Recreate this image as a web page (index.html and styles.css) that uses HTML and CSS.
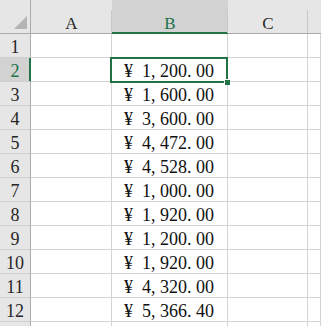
FILE: index.html
```html
<!DOCTYPE html>
<html>
<head>
<meta charset="utf-8">
<link rel="stylesheet" href="styles.css">
</head>
<body>
<div class="sheet">
  <div class="row head">
    <div class="rh corner"><span class="tri"></span></div>
    <div class="hc">A</div>
    <div class="hc sel">B</div>
    <div class="hc">C</div>
    <div class="hc rest"></div>
  </div>
  <div class="row"><div class="rh">1</div><div class="c"></div><div class="c"></div><div class="c"></div><div class="c"></div></div>
  <div class="row"><div class="rh sel">2</div><div class="c"></div><div class="c v"><span class="cur">¥</span>1<span class="p">,</span>200<span class="p">.</span>00</div><div class="c"></div><div class="c"></div></div>
  <div class="row"><div class="rh">3</div><div class="c"></div><div class="c v"><span class="cur">¥</span>1<span class="p">,</span>600<span class="p">.</span>00</div><div class="c"></div><div class="c"></div></div>
  <div class="row"><div class="rh">4</div><div class="c"></div><div class="c v"><span class="cur">¥</span>3<span class="p">,</span>600<span class="p">.</span>00</div><div class="c"></div><div class="c"></div></div>
  <div class="row"><div class="rh">5</div><div class="c"></div><div class="c v"><span class="cur">¥</span>4<span class="p">,</span>472<span class="p">.</span>00</div><div class="c"></div><div class="c"></div></div>
  <div class="row"><div class="rh">6</div><div class="c"></div><div class="c v"><span class="cur">¥</span>4<span class="p">,</span>528<span class="p">.</span>00</div><div class="c"></div><div class="c"></div></div>
  <div class="row"><div class="rh">7</div><div class="c"></div><div class="c v"><span class="cur">¥</span>1<span class="p">,</span>000<span class="p">.</span>00</div><div class="c"></div><div class="c"></div></div>
  <div class="row"><div class="rh">8</div><div class="c"></div><div class="c v"><span class="cur">¥</span>1<span class="p">,</span>920<span class="p">.</span>00</div><div class="c"></div><div class="c"></div></div>
  <div class="row"><div class="rh">9</div><div class="c"></div><div class="c v"><span class="cur">¥</span>1<span class="p">,</span>200<span class="p">.</span>00</div><div class="c"></div><div class="c"></div></div>
  <div class="row"><div class="rh">10</div><div class="c"></div><div class="c v"><span class="cur">¥</span>1<span class="p">,</span>920<span class="p">.</span>00</div><div class="c"></div><div class="c"></div></div>
  <div class="row"><div class="rh">11</div><div class="c"></div><div class="c v"><span class="cur">¥</span>4<span class="p">,</span>320<span class="p">.</span>00</div><div class="c"></div><div class="c"></div></div>
  <div class="row"><div class="rh">12</div><div class="c"></div><div class="c v"><span class="cur">¥</span>5<span class="p">,</span>366<span class="p">.</span>40</div><div class="c"></div><div class="c"></div></div>
  <div class="row"><div class="rh"></div><div class="c"></div><div class="c"></div><div class="c"></div><div class="c"></div></div>
  <div class="selection"><span class="handle"></span></div>
</div>
</body>
</html>
```

FILE: styles.css
```css
html, body {
  margin: 0;
  padding: 0;
  background: #ffffff;
}
body {
  width: 321px;
  height: 326px;
  overflow: hidden;
  font-family: "Liberation Serif", "DejaVu Serif", serif;
  color: #1a1a1a;
}
.sheet {
  position: relative;
  display: flex;
  flex-direction: column;
  height: 326px;
  overflow: hidden;
}
.row {
  display: grid;
  grid-template-columns: 31px 81px 116px 80px 1fr;
  height: 24px;
  flex: none;
}
.row > div {
  box-sizing: border-box;
  border-right: 1px solid #d4d4d4;
  border-bottom: 1px solid #d4d4d4;
  white-space: nowrap;
  overflow: hidden;
}
.row.head {
  height: 34px;
}
.row.head > div {
  background: #e6e6e6;
  border-bottom: 1px solid #ababab;
  border-right: none;
  position: relative;
}
.hc {
  font-size: 17px;
  line-height: 17px;
  padding-top: 15px;
  text-align: center;
  color: #262626;
}
.hc::after {
  content: "";
  position: absolute;
  right: 0;
  top: 10px;
  bottom: 0;
  width: 1px;
  background: #c8c8c8;
}
.hc.rest::after {
  display: none;
}
.row.head > .hc.sel {
  background: #d2d2d2;
  color: #217346;
  border-bottom: 1px solid #217346;
  box-shadow: inset 0 -1px 0 #217346;
}
.rh {
  background: #e6e6e6;
  font-size: 18px;
  line-height: 19px;
  padding-top: 4px;
  text-align: center;
  color: #262626;
}
.row > .rh {
  border-right: 1px solid #ababab;
  border-bottom: 1px solid #cfcfcf;
}
.row.head > .rh.corner {
  border-right: 1px solid #ababab;
}
.row > .rh.sel {
  background: #d2d2d2;
  color: #217346;
  border-right: 1px solid #217346;
  box-shadow: inset -1px 0 0 #217346;
}
.tri {
  position: absolute;
  right: 3px;
  bottom: 4px;
  width: 0;
  height: 0;
  border-left: 13px solid transparent;
  border-bottom: 13px solid #b4b4b4;
}
.c.v {
  font-size: 18px;
  line-height: 19px;
  padding-top: 4px;
  padding-left: 12px;
  color: #111111;
}
.cur {
  display: inline-block;
  width: 18px;
}
.p {
  display: inline-block;
  width: 9px;
}
.selection {
  position: absolute;
  left: 110px;
  top: 57px;
  width: 118px;
  height: 26px;
  box-sizing: border-box;
  border: 2px solid #217346;
}
.handle {
  position: absolute;
  right: -4px;
  bottom: -4px;
  width: 5px;
  height: 5px;
  background: #217346;
  border: 1px solid #ffffff;
  border-right: none;
  border-bottom: none;
}
```
